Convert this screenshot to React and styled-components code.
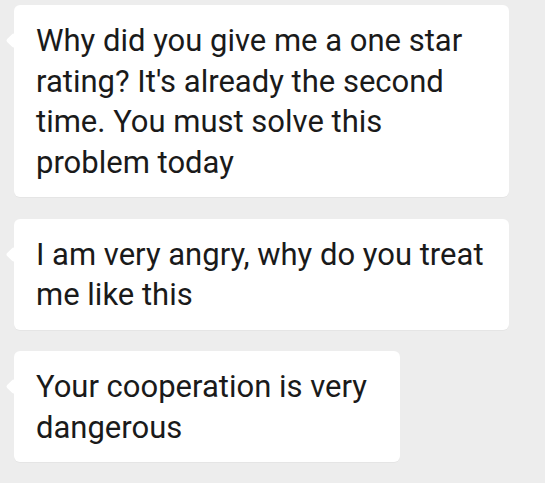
import React from "react";
import styled, { createGlobalStyle } from "styled-components";

const messages = [
  {
    id: 1,
    text: "Why did you give me a one star rating? It's already the second time. You must solve this problem today",
    width: 495,
  },
  { id: 2, text: "I am very angry, why do you treat me like this", width: 495 },
  { id: 3, text: "Your cooperation is very dangerous", width: 386 },
];

export default function App() {
  return (
    <>
      <GlobalStyle />
      <Chat>
        {messages.map((m) => (
          <Bubble key={m.id} $width={m.width}>
            {m.text}
          </Bubble>
        ))}
      </Chat>
    </>
  );
}

const GlobalStyle = createGlobalStyle`
  html, body {
    margin: 0;
    padding: 0;
    background: #ededed;
  }
  body {
    width: 545px;
    height: 483px;
    overflow: hidden;
    font-family: Roboto, "Noto Sans", sans-serif;
  }
`;

const Chat = styled.div`
  display: flex;
  flex-direction: column;
  align-items: flex-start;
  gap: 21.5px;
  padding: 5px 0 0 14px;
`;

const Bubble = styled.div`
  position: relative;
  box-sizing: border-box;
  width: ${(p) => p.$width}px;
  padding: 16px 20px 14px 22px;
  background: #ffffff;
  border-radius: 6px;
  box-shadow: 0 1px 0 rgba(0, 0, 0, 0.03);
  color: #1a1a1a;
  font-size: 31px;
  line-height: 40.5px;

  &::before {
    content: "";
    position: absolute;
    left: -6px;
    top: 30px;
    width: 11px;
    height: 11px;
    background: #ffffff;
    border-radius: 2px;
    transform: rotate(45deg);
  }
`;
